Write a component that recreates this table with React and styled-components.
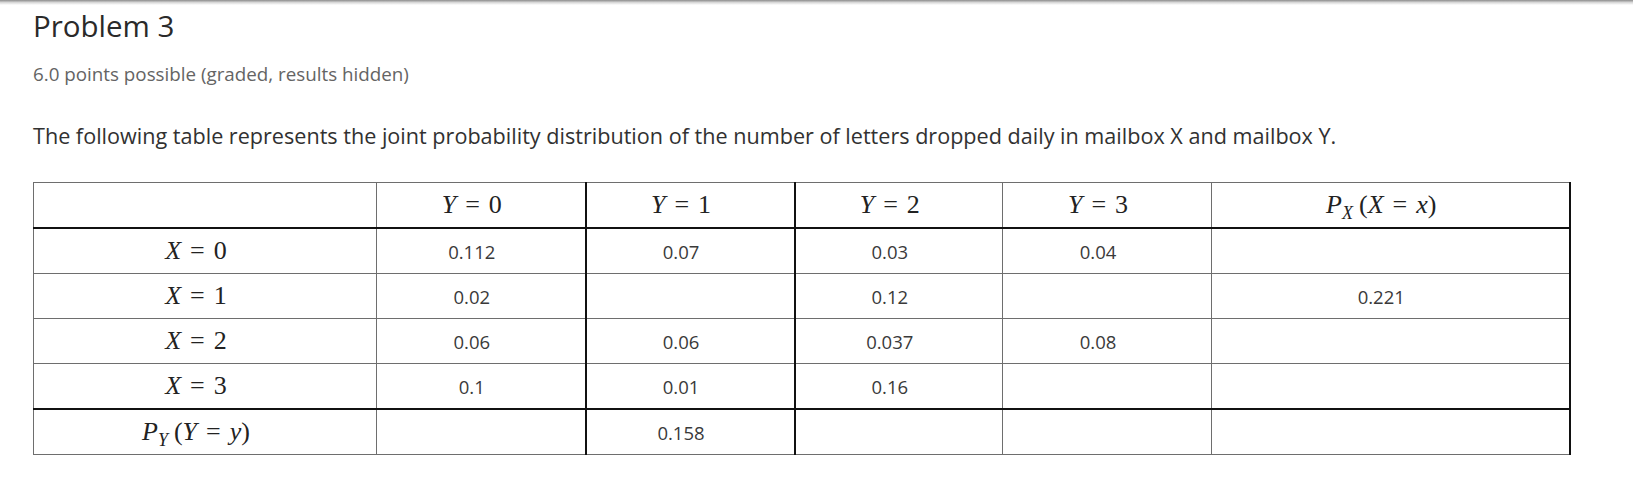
import React from 'react'
import styled, { createGlobalStyle } from 'styled-components'

const GlobalStyle = createGlobalStyle`
  html, body {
    margin: 0;
    padding: 0;
    background: #ffffff;
  }
  body {
    font-family: "Open Sans", "Liberation Sans", sans-serif;
    color: #313131;
  }
`

const TopShade = styled.div`
  height: 5px;
  background: linear-gradient(#8c8c8c, #d8d8d8 50%, #ffffff);
`

const Page = styled.div`
  padding: 0 33px;
`

const Title = styled.h2`
  margin: 3px 0 0;
  font-size: 29.5px;
  font-weight: 500;
  line-height: 36px;
  color: #2a2a2a;
`

const Points = styled.div`
  margin-top: 17px;
  font-size: 18.8px;
  line-height: 26px;
  color: #646464;
`

const Prompt = styled.p`
  margin: 34px 0 0;
  font-size: 21.6px;
  line-height: 30px;
  color: #313131;
`

const Table = styled.table`
  margin-top: 31px;
  width: 1536px;
  border-collapse: collapse;
  table-layout: fixed;
`

const Cell = styled.td`
  height: 44px;
  padding: 0 18px 0 0;
  text-align: center;
  vertical-align: middle;
  font-size: 18.5px;
  color: #3a3a3a;
  border: 1px solid #6e6e6e;
  ${props => props.strong && `
    border-left: 2px solid #111;
    border-right: 2px solid #111;
  `}
  ${props => props.last && `border-right: 2px solid #111;`}
  ${props => props.head && `border-bottom: 2px solid #111;`}
  ${props => props.total && `border-top: 2px solid #111;`}
`

const Math = styled.span`
  font-family: "Liberation Serif", "DejaVu Serif", serif;
  font-size: 26px;
  color: #222;
  white-space: nowrap;
`

const Var = styled.i`
  font-style: italic;
`

const Sub = styled.sub`
  font-style: italic;
  font-size: 18px;
  vertical-align: -6px;
  line-height: 0;
`

const Eq = styled.span`
  margin: 0 9px;
`

const Relation = ({ name, value }) => (
  <Math>
    <Var>{name}</Var>
    <Eq>=</Eq>
    {value}
  </Math>
)

const Marginal = ({ name, value }) => (
  <Math>
    <Var>P</Var>
    <Sub>{name}</Sub>
    <span style={{ marginLeft: 6 }}>(</span>
    <Var>{name}</Var>
    <Eq>=</Eq>
    <Var>{value}</Var>)
  </Math>
)

const rows = [
  { x: '0', values: ['0.112', '0.07', '0.03', '0.04', ''] },
  { x: '1', values: ['0.02', '', '0.12', '', '0.221'] },
  { x: '2', values: ['0.06', '0.06', '0.037', '0.08', ''] },
  { x: '3', values: ['0.1', '0.01', '0.16', '', ''] },
]

const totals = ['', '0.158', '', '', '']

const widths = [343, 209, 209, 208, 209, 358]

const App = () => {
  return (
    <>
      <GlobalStyle />
      <TopShade />
      <Page>
        <Title>Problem 3</Title>
        <Points>6.0 points possible (graded, results hidden)</Points>
        <Prompt>
          The following table represents the joint probability distribution of the number of letters dropped daily in mailbox X and mailbox Y.
        </Prompt>
        <Table>
          <colgroup>
            {widths.map((w, i) => <col key={i} style={{ width: w }} />)}
          </colgroup>
          <tbody>
            <tr>
              <Cell head />
              {['0', '1', '2', '3'].map((y, i) => (
                <Cell head key={y} strong={i === 1}>
                  <Relation name="Y" value={y} />
                </Cell>
              ))}
              <Cell head last>
                <Marginal name="X" value="x" />
              </Cell>
            </tr>
            {rows.map(row => (
              <tr key={row.x}>
                <Cell><Relation name="X" value={row.x} /></Cell>
                {row.values.map((v, i) => (
                  <Cell key={i} strong={i === 1} last={i === 4}>{v}</Cell>
                ))}
              </tr>
            ))}
            <tr>
              <Cell total><Marginal name="Y" value="y" /></Cell>
              {totals.map((v, i) => (
                <Cell total key={i} strong={i === 1} last={i === 4}>{v}</Cell>
              ))}
            </tr>
          </tbody>
        </Table>
      </Page>
    </>
  )
}

export default App
